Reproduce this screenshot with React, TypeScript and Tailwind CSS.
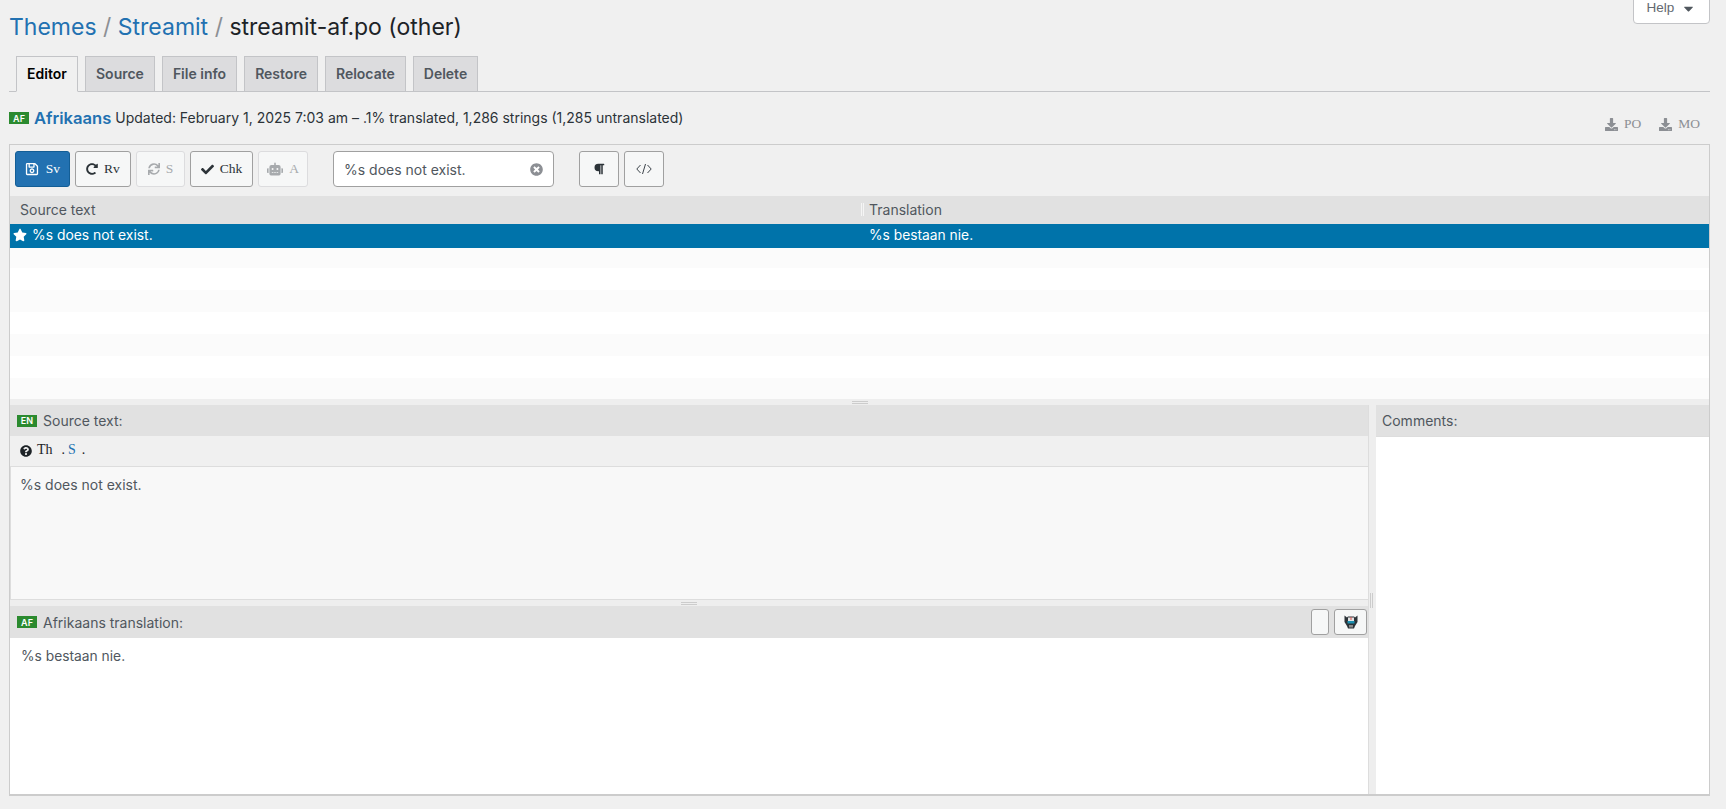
import React from 'react';
import { FaRegSave, FaRedoAlt, FaSync, FaCheck, FaRobot, FaStar, FaQuestionCircle, FaParagraph, FaTimesCircle, FaDownload, FaCaretDown } from 'react-icons/fa';

const tabs = ['Source', 'File info', 'Restore', 'Relocate', 'Delete'];

// empty list rows under the selected one, striped
const emptyRows = [
  'h-[20px] bg-[#fbfbfb]',
  'h-[22px] bg-white',
  'h-[22px] bg-[#fbfbfb]',
  'h-[22px] bg-white',
  'h-[22px] bg-[#fbfbfb]',
  'h-[22px] bg-white',
  'h-[21px] bg-[#fbfbfb]',
];

const Flag = ({ code }: { code: string }) => (
  <span className="inline-flex items-center justify-center w-[20px] h-[12px] bg-[#2b8a2f] text-white text-[9px] font-semibold leading-none shrink-0">{code}</span>
);

const ToolButton = ({ icon, label, width, disabled }: { icon: React.ReactNode; label: string; width: string; disabled?: boolean }) => (
  <button
    className={`${width} h-[36px] flex items-center justify-center gap-[6px] rounded-[3px] border bg-[#f6f7f7] font-['Liberation_Serif',serif] text-[13.5px] ${
      disabled ? 'border-[#dcdcde] text-[#a7aaad]' : 'border-[#a0a0a0] text-[#2c3338]'
    }`}
  >
    {icon}
    <span>{label}</span>
  </button>
);

const SplitHandle = () => (
  <div className="h-[6px] bg-[#eeeeee] flex items-center justify-center">
    <div className="w-[16px] h-[3px] border-y border-[#cccccc]" />
  </div>
);

const BotIcon = () => (
  <svg width="14" height="14" viewBox="0 0 14 14">
    <path d="M0.5 0.5 L3 2.5 L4 1.5 L10 1.5 L11 2.5 L13.5 0.5 L13.5 7 L11 11 L10 13.5 L4 13.5 L3 11 L0.5 7 Z" fill="#2c3338" />
    <rect x="4" y="2.5" width="6" height="3.5" fill="#e4e4e4" />
    <rect x="6.5" y="2" width="1" height="3" fill="#d9534f" />
    <rect x="3.5" y="6" width="7" height="2.5" fill="#1b8fb0" />
    <rect x="5" y="10" width="4" height="2.5" fill="#8a8a8a" />
  </svg>
);

const CodeIcon = () => (
  <svg width="16" height="12" viewBox="0 0 16 12" fill="none" stroke="#3c434a" strokeWidth="1">
    <path d="M4.5 2 L0.8 6 L4.5 10" />
    <path d="M9.5 1 L6.5 11" />
    <path d="M11.5 2 L15.2 6 L11.5 10" />
  </svg>
);

export default function App() {
  return (
    <div className="h-[809px] bg-[#f0f0f0] font-['Inter',sans-serif] text-[#3c434a] pl-[9px] pr-[16px] overflow-hidden">
      <div className="relative h-[56px]">
        <h1 className="pt-[13px] text-[23px] leading-[29px] text-[#1d2327]">
          <a className="text-[#2271b1]">Themes</a>
          <span className="text-[#8c8f94]"> / </span>
          <a className="text-[#2271b1]">Streamit</a>
          <span className="text-[#8c8f94]"> / </span>
          streamit-af.po (other)
        </h1>
        <button className="absolute right-0 top-[-8px] w-[77px] h-[32px] bg-white border border-[#c3c4c7] rounded-b-[4px] text-[13.5px] text-[#646970] flex items-center justify-center gap-[7px] font-['Liberation_Sans',sans-serif]">
          Help <FaCaretDown size={15} className="text-[#50575e]" />
        </button>
      </div>

      <div className="flex gap-[7px] pl-[7px] border-b border-[#c3c4c7] h-[36px] items-end">
        <div className="h-[36px] w-[62px] -mb-px pb-[2px] bg-[#f0f0f0] border border-[#c3c4c7] border-b-[#f0f0f0] flex items-center justify-center text-[14px] font-semibold text-black">Editor</div>
        {tabs.map((t) => (
          <div key={t} className="h-[35px] px-[10px] pb-[2px] bg-[#dcdcde] border border-b-0 border-[#c3c4c7] flex items-center justify-center text-[14px] font-semibold text-[#50575e]">{t}</div>
        ))}
      </div>

      <div className="h-[52px] flex items-start justify-between">
        <div className="flex items-center pt-[15px] text-[14px] leading-[22px] text-[#2c3338]">
          <Flag code="AF" />
          <span className="ml-[5px] text-[16.6px] font-semibold text-[#2271b1]">Afrikaans</span>
          <span className="ml-[4px]">Updated: February 1, 2025 7:03 am – .1% translated, 1,286 strings (1,285 untranslated)</span>
        </div>
        <div className="flex items-center gap-[18px] pt-[24px] pr-[10px] font-['Liberation_Serif',serif] text-[13.5px] leading-[16px] text-[#8c8f94]">
          <span className="flex items-center gap-[6px]"><FaDownload size={13} />PO</span>
          <span className="flex items-center gap-[6px]"><FaDownload size={13} />MO</span>
        </div>
      </div>

      <div className="h-[652px] border border-[#cccccc] border-b-2 flex flex-col">
        <div className="h-[51px] shrink-0 flex items-center gap-[5px] pl-[5px] pb-[3px]">
          <button className="w-[55px] h-[36px] flex items-center justify-center gap-[7px] rounded-[3px] border border-[#135e96] bg-[#2271b1] text-white font-['Liberation_Serif',serif] text-[13.5px]">
            <FaRegSave size={14} />
            <span>Sv</span>
          </button>
          <ToolButton width="w-[56px]" label="Rv" icon={<FaRedoAlt size={12} />} />
          <ToolButton width="w-[49px]" label="S" icon={<FaSync size={12} />} disabled />
          <ToolButton width="w-[63px]" label="Chk" icon={<FaCheck size={13} />} />
          <ToolButton width="w-[50px]" label="A" icon={<FaRobot size={16} />} disabled />
          <div className="ml-[20px] w-[221px] h-[36px] rounded-[4px] border border-[#a0a0a0] bg-white flex items-center justify-between pl-[10px] pr-[10px] text-[14px] text-[#50575e]">
            <span>%s does not exist.</span>
            <FaTimesCircle size={13} className="text-[#8c8f94]" />
          </div>
          <button className="ml-[20px] w-[40px] h-[36px] rounded-[3px] border border-[#a0a0a0] bg-[#f6f7f7] flex items-center justify-center text-[#2c3338]">
            <FaParagraph size={12} />
          </button>
          <button className="w-[40px] h-[36px] rounded-[3px] border border-[#a0a0a0] bg-[#f6f7f7] flex items-center justify-center">
            <CodeIcon />
          </button>
        </div>

        <div className="h-[28px] shrink-0 bg-[#e1e1e1] flex items-center pb-[2px] text-[14px] text-[#50575e]">
          <div className="w-[854px] pl-[10px] flex items-center justify-between">
            <span>Source text</span>
            <span className="w-[3px] h-[13px] border-x border-[#f5f5f5]" />
          </div>
          <span className="pl-[5px]">Translation</span>
        </div>
        <div className="h-[24px] shrink-0 bg-[#0073aa] text-white flex items-center text-[14px]">
          <div className="w-[859px] flex items-center pl-[3px] gap-[5px]">
            <FaStar size={14} className="mb-[2px]" />
            <span className="text-[13.9px] mb-[1px]">%s does not exist.</span>
          </div>
          <span className="text-[13.8px] mb-[1px]">%s bestaan nie.</span>
        </div>
        {emptyRows.map((cls, i) => (
          <div key={i} className={`shrink-0 ${cls}`} />
        ))}
        <SplitHandle />

        <div className="flex-1 flex min-h-0">
          <div className="relative w-[1358px] flex flex-col">
            <div className="h-[31px] shrink-0 bg-[#e1e1e1] flex items-center gap-[6px] pl-[7px] text-[14px] text-[#50575e]">
              <Flag code="EN" />
              <span>Source text:</span>
            </div>
            <div className="h-[30px] shrink-0 flex items-center pl-[10px] pb-[3px] font-['Liberation_Serif',serif] text-[14px] text-[#1d2327]">
              <FaQuestionCircle size={12} className="mt-[3px]" />
              <span className="ml-[5px]">Th</span>
              <span className="ml-[9px]">.</span>
              <span className="ml-[3px] text-[#2271b1]">S</span>
              <span className="ml-[6px]">.</span>
            </div>
            <div className="h-[134px] shrink-0 bg-[#f8f8f8] border border-[#dddddd] border-r-0 pl-[9px] pt-[9px] text-[14px] leading-[18px] text-[#50575e]">
              %s does not exist.
            </div>
            <SplitHandle />
            <div className="h-[32px] shrink-0 bg-[#e1e1e1] flex items-center pl-[7px] pr-[1px] text-[14px] text-[#50575e]">
              <Flag code="AF" />
              <span className="ml-[6px]">Afrikaans translation:</span>
              <button className="ml-auto w-[18px] h-[26px] rounded-[3px] border border-[#a0a0a0] bg-[#f6f7f7]" />
              <button className="ml-[5px] w-[33px] h-[26px] rounded-[3px] border border-[#a0a0a0] bg-[#f6f7f7] flex items-center justify-center">
                <BotIcon />
              </button>
            </div>
            <div className="flex-1 bg-white pl-[11px] pt-[9px] text-[13.8px] leading-[18px] text-[#50575e]">%s bestaan nie.</div>
            <div className="absolute right-[-5px] top-[188px] w-[3px] h-[15px] border-x border-[#cccccc]" />
          </div>
          <div className="w-[8px] shrink-0 bg-[#eeeeee] border-l border-[#dddddd]" />
          <div className="flex-1 flex flex-col">
            <div className="h-[31px] shrink-0 bg-[#e1e1e1] flex items-center pl-[6px] text-[14px] text-[#50575e]">Comments:</div>
            <div className="flex-1 bg-white border-t border-[#dddddd]" />
          </div>
        </div>
      </div>
    </div>
  );
}
